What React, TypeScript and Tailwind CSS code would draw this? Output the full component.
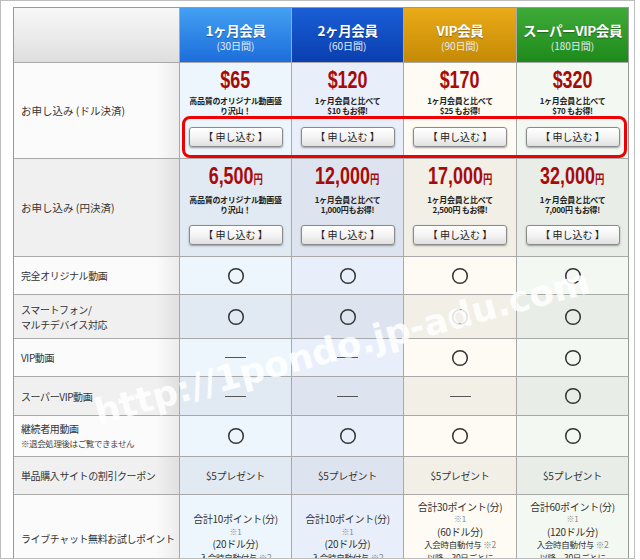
import React from "react";

const GRID = "grid grid-cols-[166px_112px_112px_113px_112px]";
const CELL = "border-r border-b border-[#a9a9a9]";

const lightCols = ["bg-[#edf6fd]", "bg-[#e9effa]", "bg-[#fdfbf4]", "bg-[#f3f9f2]"];
const darkCols = ["bg-[#e1eaf3]", "bg-[#dde4ef]", "bg-[#f2efe7]", "bg-[#e8eee7]"];
const labelLight = "bg-[linear-gradient(to_right,#fbfbfb_86%,#ececec)]";
const labelDark = "bg-[linear-gradient(to_right,#f0f0f0_86%,#e0e0e0)]";

function Circle() {
  return (
    <svg width="18" height="18" viewBox="0 0 18 18">
      <circle cx="9" cy="9" r="7.3" fill="none" stroke="#333" strokeWidth="1.5" />
    </svg>
  );
}

function Dash() {
  return <div className="w-[21px] h-px bg-[#555]" />;
}

function Row({
  h,
  dark,
  label,
  cells,
}: {
  h: string;
  dark: boolean;
  label: React.ReactNode;
  cells: React.ReactNode[];
}) {
  const cols = dark ? darkCols : lightCols;
  return (
    <div className={`${GRID} ${h}`}>
      <div
        className={`${CELL} ${dark ? labelDark : labelLight} flex flex-col justify-center pl-[7px] text-[10px] leading-[15px] tracking-[-0.4px] text-[#333]`}
      >
        {label}
      </div>
      {cells.map((c, i) => (
        <div
          key={i}
          className={`${CELL} ${cols[i]} ${i === 3 ? "border-r-[#999]" : ""} flex flex-col items-center justify-center`}
        >
          {c}
        </div>
      ))}
    </div>
  );
}

function ApplyButton() {
  return (
    <div className="w-[94px] h-[20px] rounded-[3px] border border-[#8a8a8a] bg-[linear-gradient(#ffffff,#f4f4f4_50%,#e0e0e0)] shadow-[0_1px_2px_rgba(0,0,0,0.35)] flex items-center justify-center text-[10px] text-[#222] leading-[18px]">
      【 申し込む 】
    </div>
  );
}

function PriceCell({
  price,
  yen,
  desc,
}: {
  price: string;
  yen?: boolean;
  desc: React.ReactNode;
}) {
  return (
    <div className="flex flex-col items-center pt-[5px] h-full">
      <div
        className={`${yen ? "h-[26px]" : "h-[24px]"} leading-[24px] font-['Liberation_Sans',sans-serif] font-bold text-[23px] text-[#a80a0a] scale-x-[0.78] whitespace-nowrap`}
      >
        {price}
        {yen && <span className="text-[12px] font-['Noto_Sans_CJK_JP',sans-serif]">円</span>}
      </div>
      <div
        className={`${yen ? "mt-[5px]" : "mt-[4px]"} text-[8px] leading-[10px] font-bold text-[#222] text-center tracking-[-0.3px]`}
      >
        {desc}
      </div>
      <div className={yen ? "mt-[10px]" : "mt-[11px]"}>
        <ApplyButton />
      </div>
    </div>
  );
}

const headers = [
  { title: "1ヶ月会員", sub: "(30日間)", bg: "bg-[linear-gradient(#43a0f2,#1d6ddb)]" },
  { title: "2ヶ月会員", sub: "(60日間)", bg: "bg-[linear-gradient(#1a5ed6,#0a3fb0)]" },
  { title: "VIP会員", sub: "(90日間)", bg: "bg-[linear-gradient(#eaab18,#c58a06)]" },
  { title: "スーパーVIP会員", sub: "(180日間)", bg: "bg-[linear-gradient(#3eab38,#1e8a1b)]" },
];

function Points({
  total,
  dollars,
  more,
}: {
  total: string;
  dollars: string;
  more?: boolean;
}) {
  return (
    <div className="text-center text-[10px] leading-[12.5px] text-[#333] tracking-[-0.3px]">
      <div>{total}</div>
      <div className="text-[8px] text-[#888]">※1</div>
      <div>{dollars}</div>
      <div className="text-[8.5px]">
        入会時自動付与 <span className="text-[#888]">※2</span>
      </div>
      {more && (
        <>
          <div className="text-[8.5px]">以降、30日ごとに</div>
          <div className="text-[8.5px]">10ポイント付与</div>
        </>
      )}
    </div>
  );
}

export default function App() {
  return (
    <div className="relative w-[640px] h-[560px] bg-white overflow-hidden font-['Noto_Sans_CJK_JP',sans-serif]">
      <div className="w-[635px] h-[559px] border border-[#bdbdbd] overflow-hidden pl-[12px] pt-[6px]">
        <div className="w-[616px] border-l border-t border-[#999]">
          {/* header */}
          <div className={`${GRID} h-[55px]`}>
            <div className={`${CELL} bg-[linear-gradient(#f7f7f7,#e9e9e9_60%,#dedede)]`} />
            {headers.map((hd, i) => (
              <div
                key={i}
                className={`${CELL} ${hd.bg} ${i === 3 ? "border-r-[#999]" : ""} flex flex-col items-center justify-center pt-[2px] text-white`}
              >
                <div className="text-[13.5px] font-bold leading-[18px] tracking-[-0.4px] [text-shadow:0_1px_1px_rgba(0,0,0,0.35)]">
                  {hd.title}
                </div>
                <div className="text-[10px] leading-[13px] text-[#e6ecf5]">{hd.sub}</div>
              </div>
            ))}
          </div>

          {/* dollar row */}
          <div className={`${GRID} h-[96px]`}>
            <div className={`${CELL} ${labelLight} flex items-center pl-[7px] text-[10.5px] text-[#333]`}>
              お申し込み (ドル決済)
            </div>
            <div className={`${CELL} bg-[#edf6fd]`}>
              <PriceCell price="$65" desc={<>高品質のオリジナル動画盛<br />り沢山！</>} />
            </div>
            <div className={`${CELL} bg-[#e9effa]`}>
              <PriceCell price="$120" desc={<>1ヶ月会員と比べて<br />$10 もお得!</>} />
            </div>
            <div className={`${CELL} bg-[#fdfbf4]`}>
              <PriceCell price="$170" desc={<>1ヶ月会員と比べて<br />$25 もお得!</>} />
            </div>
            <div className={`${CELL} border-r-[#999] bg-[#f3f9f2]`}>
              <PriceCell price="$320" desc={<>1ヶ月会員と比べて<br />$70 もお得!</>} />
            </div>
          </div>

          {/* yen row */}
          <div className={`${GRID} h-[98px]`}>
            <div className={`${CELL} ${labelDark} flex items-center pl-[7px] text-[10.5px] text-[#333]`}>
              お申し込み (円決済)
            </div>
            <div className={`${CELL} bg-[#e1eaf3]`}>
              <PriceCell price="6,500" yen desc={<>高品質のオリジナル動画盛<br />り沢山！</>} />
            </div>
            <div className={`${CELL} bg-[#dde4ef]`}>
              <PriceCell price="12,000" yen desc={<>1ヶ月会員と比べて<br />1,000円もお得!</>} />
            </div>
            <div className={`${CELL} bg-[#f2efe7]`}>
              <PriceCell price="17,000" yen desc={<>1ヶ月会員と比べて<br />2,500円 もお得!</>} />
            </div>
            <div className={`${CELL} border-r-[#999] bg-[#e8eee7]`}>
              <PriceCell price="32,000" yen desc={<>1ヶ月会員と比べて<br />7,000円 もお得!</>} />
            </div>
          </div>

          <Row h="h-[38px]" dark={false} label="完全オリジナル動画" cells={[<Circle />, <Circle />, <Circle />, <Circle />]} />
          <Row
            h="h-[44px]"
            dark
            label={
              <>
                <div>スマートフォン/</div>
                <div>マルチデバイス対応</div>
              </>
            }
            cells={[<Circle />, <Circle />, <Circle />, <Circle />]}
          />
          <Row h="h-[38px]" dark={false} label="VIP動画" cells={[<Dash />, <Dash />, <Circle />, <Circle />]} />
          <Row h="h-[39px]" dark label="スーパーVIP動画" cells={[<Dash />, <Dash />, <Dash />, <Circle />]} />
          <Row
            h="h-[41px]"
            dark={false}
            label={
              <>
                <div className="leading-[14px]">継続者用動画</div>
                <div className="leading-[14px] text-[8.5px] text-[#444]">※退会処理後はご覧できません</div>
              </>
            }
            cells={[<Circle />, <Circle />, <Circle />, <Circle />]}
          />
          <Row
            h="h-[38px]"
            dark
            label="単品購入サイトの割引クーポン"
            cells={["$5プレゼント", "$5プレゼント", "$5プレゼント", "$5プレゼント"].map((t, i) => (
              <span key={i} className="text-[10px] text-[#333] tracking-[-0.3px]">
                {t}
              </span>
            ))}
          />
          <Row
            h="h-[87px]"
            dark={false}
            label="ライブチャット無料お試しポイント"
            cells={[
              <Points total="合計10ポイント(分)" dollars="(20ドル分)" />,
              <Points total="合計10ポイント(分)" dollars="(20ドル分)" />,
              <Points total="合計30ポイント(分)" dollars="(60ドル分)" more />,
              <Points total="合計60ポイント(分)" dollars="(120ドル分)" more />,
            ]}
          />
        </div>
      </div>

      {/* red highlight around dollar buttons */}
      <div className="absolute left-[182px] top-[116px] w-[445px] h-[42px] border-[3px] border-[#f00000] rounded-[8px] pointer-events-none" />

      {/* watermark */}
      <div className="absolute left-[342px] top-[347px] -translate-x-1/2 -translate-y-1/2 -rotate-[15deg] whitespace-nowrap font-['DejaVu_Sans',sans-serif] font-bold text-[35.5px] leading-[40px] text-white/85 pointer-events-none">
        http://1pondo.jp-adu.com
      </div>
    </div>
  );
}
